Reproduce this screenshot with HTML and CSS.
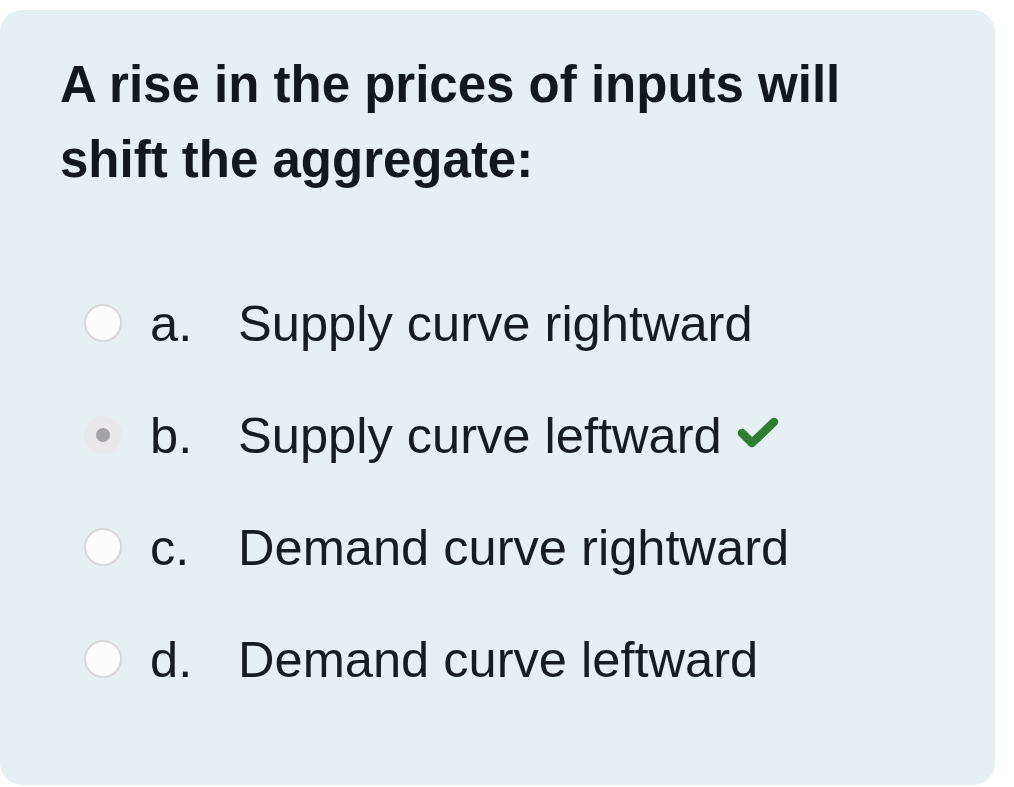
FILE: index.html
```html
<!DOCTYPE html>
<html>
<head>
<meta charset="utf-8">
<link rel="stylesheet" href="styles.css">
</head>
<body>
<div class="card">
  <h1 class="question">A rise in the prices of inputs will shift the aggregate:</h1>
  <div class="options">
    <div class="option">
      <span class="radio"></span>
      <span class="letter">a.</span>
      <span class="text">Supply curve rightward</span>
    </div>
    <div class="option">
      <span class="radio selected"><span class="dot"></span></span>
      <span class="letter">b.</span>
      <span class="text">Supply curve leftward</span>
      <svg class="check" width="44" height="34" viewBox="0 0 44 34"><path d="M6 17 L16 27 L38 6" fill="none" stroke="#2f7d2f" stroke-width="8.5" stroke-linecap="round" stroke-linejoin="round"/></svg>
    </div>
    <div class="option">
      <span class="radio"></span>
      <span class="letter">c.</span>
      <span class="text">Demand curve rightward</span>
    </div>
    <div class="option">
      <span class="radio"></span>
      <span class="letter">d.</span>
      <span class="text">Demand curve leftward</span>
    </div>
  </div>
</div>
</body>
</html>
```
FILE: styles.css
```css
html, body {
  margin: 0;
  padding: 0;
  background: #ffffff;
}
body {
  font-family: "Liberation Sans", Arial, sans-serif;
  color: #161c21;
}
.card {
  margin-top: 10px;
  width: 995px;
  height: 775px;
  box-sizing: border-box;
  background: #e6eff2;
  border-radius: 22px;
  padding: 37px 0 0 60px;
}
.question {
  margin: 0;
  width: 800px;
  font-size: 51px;
  line-height: 75px;
  font-weight: bold;
  color: #12181d;
}
.options {
  margin-top: 70px;
  display: flex;
  flex-direction: column;
}
.option {
  display: flex;
  align-items: center;
  height: 112px;
  font-size: 50.6px;
}
.radio {
  width: 38px;
  height: 38px;
  box-sizing: border-box;
  border: 2px solid #d9d7d9;
  border-radius: 50%;
  background: #fdfcfd;
  margin-left: 24px;
  margin-right: 28px;
  display: flex;
  align-items: center;
  justify-content: center;
  flex-shrink: 0;
}
.radio.selected {
  border-color: transparent;
  background: #ebe8ec;
}
.dot {
  width: 14px;
  height: 14px;
  border-radius: 50%;
  background: #a3a2a6;
}
.letter {
  width: 88px;
}
.check {
  margin-left: 14px;
  margin-top: -4px;
}
```
